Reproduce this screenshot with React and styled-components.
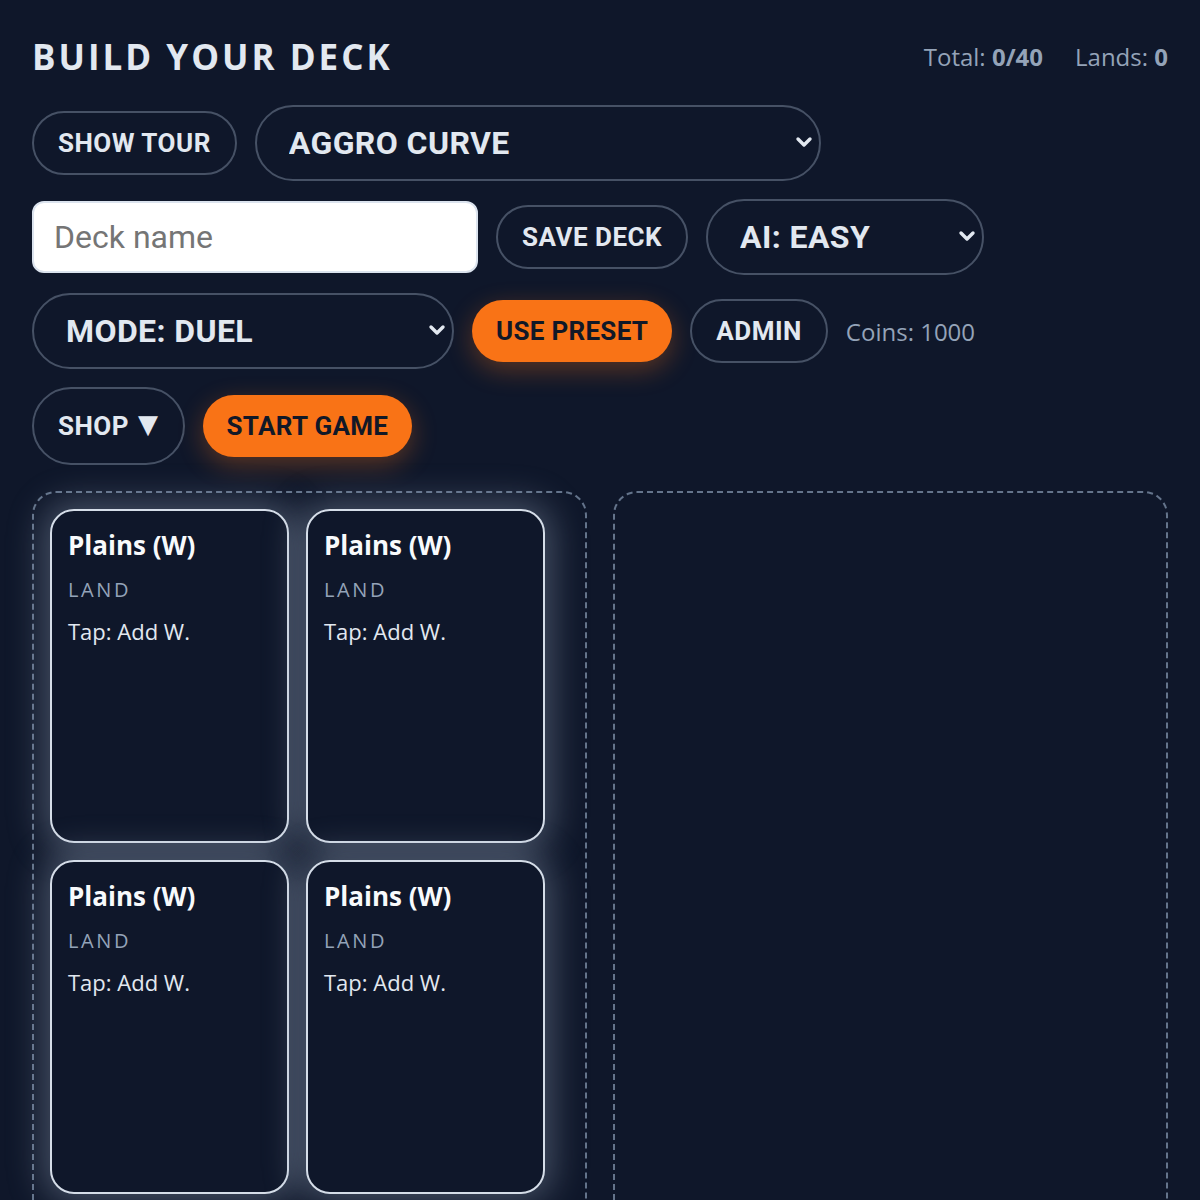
import React from 'react'
import styled, { createGlobalStyle } from 'styled-components'

const GlobalStyle = createGlobalStyle`
  html, body {
    margin: 0;
    padding: 0;
    background: #0f172a;
    min-height: 100%;
  }
  body {
    font-family: 'Open Sans', 'Noto Sans', sans-serif;
    color: #e2e8f0;
  }
`

const Page = styled.main`
  box-sizing: border-box;
  min-height: 1200px;
  padding: 36px 32px 0;
  background: #0f172a;
  overflow: hidden;
`

const Header = styled.header`
  display: flex;
  align-items: center;
  justify-content: space-between;
  margin-bottom: 28px;
`

const Title = styled.h1`
  margin: 0;
  font-family: 'Open Sans', sans-serif;
  font-size: 35px;
  font-weight: 700;
  line-height: 41px;
  letter-spacing: 3px;
  text-transform: uppercase;
  color: #e2e8f0;
`

const Stats = styled.div`
  display: flex;
  gap: 32px;
  font-size: 24px;
  color: #94a3b8;

  b {
    font-weight: 700;
  }
`

const Controls = styled.section`
  display: flex;
  flex-direction: column;
  gap: 18px;
  margin-bottom: 26px;
`

const Row = styled.div`
  display: flex;
  align-items: center;
  gap: 18px;
`

const Button = styled.button`
  box-sizing: border-box;
  display: inline-flex;
  align-items: center;
  gap: 9px;
  height: ${(p) => (p.$tall ? '78px' : p.$primary ? '62px' : '64px')};
  padding: 0 24px;
  border-radius: 999px;
  border: ${(p) => (p.$primary ? 'none' : '2px solid #465165')};
  background: ${(p) => (p.$primary ? '#f97316' : 'transparent')};
  color: ${(p) => (p.$primary ? '#111827' : '#e2e8f0')};
  box-shadow: ${(p) => (p.$primary ? '0 8px 26px rgba(249, 115, 22, 0.32)' : 'none')};
  font-family: Roboto, 'Liberation Sans', sans-serif;
  font-size: 26px;
  font-weight: 700;
  letter-spacing: ${(p) => (p.$primary ? '0.3px' : '0.5px')};
  text-transform: uppercase;
  white-space: nowrap;
  cursor: pointer;
`

const Caret = styled.span`
  font-family: 'DejaVu Sans', sans-serif;
  font-size: 26px;
  line-height: 1;
  margin-top: -4px;
`

const SelectWrap = styled.div`
  position: relative;
  width: ${(p) => p.$width}px;
`

const Select = styled.select`
  appearance: none;
  box-sizing: border-box;
  width: 100%;
  height: 76px;
  padding: 0 48px 0 32px;
  border-radius: 999px;
  border: 2px solid #465165;
  background: #0f172a;
  color: #e2e8f0;
  font-family: Roboto, 'Liberation Sans', sans-serif;
  font-size: 32px;
  font-weight: 700;
  letter-spacing: 0.4px;
  text-transform: uppercase;
  outline: none;
`

const Chevron = styled.svg`
  position: absolute;
  right: 8px;
  top: 50%;
  width: 18px;
  height: 12px;
  margin-top: -7px;
  pointer-events: none;
`

const NameInput = styled.input`
  box-sizing: border-box;
  width: 446px;
  height: 72px;
  padding: 0 20px;
  border-radius: 12px;
  border: 2px solid #dbe3ee;
  background: #ffffff;
  color: #1f2937;
  font-family: Roboto, 'Liberation Sans', sans-serif;
  font-size: 32px;
  outline: none;

  &::placeholder {
    color: #757575;
  }
`

const Coins = styled.span`
  font-size: 24px;
  color: #94a3b8;
`

const Boards = styled.section`
  display: grid;
  grid-template-columns: 1fr 1fr;
  gap: 26px;
`

const Pile = styled.div`
  box-sizing: border-box;
  min-height: 760px;
  padding: 16px;
  border: 2px dashed #64748b;
  border-radius: 24px;
  display: grid;
  grid-template-columns: repeat(auto-fill, 239px);
  grid-auto-rows: 334px;
  gap: 17px;
  align-content: start;
`

const Card = styled.article`
  box-sizing: border-box;
  display: flex;
  flex-direction: column;
  padding: 18px 16px 16px;
  border: 2px solid #d5dde8;
  border-radius: 24px;
  background: #0f172a;
  box-shadow: 0 0 34px 8px rgba(148, 163, 184, 0.4);
`

const CardName = styled.h3`
  margin: 0 0 13px;
  font-size: 26px;
  font-weight: 700;
  line-height: 33px;
  color: #f8fafc;
`

const CardType = styled.div`
  margin-bottom: 11px;
  font-size: 20px;
  line-height: 30px;
  letter-spacing: 2.6px;
  text-transform: uppercase;
  color: #94a3b8;
`

const CardText = styled.p`
  margin: 0;
  font-size: 22px;
  line-height: 30px;
  color: #e2e8f0;
`

const ChevronIcon = () => (
  <Chevron viewBox='0 0 18 12' aria-hidden>
    <path
      d='M3 3l6 6 6-6'
      stroke='#e2e8f0'
      strokeWidth='3.4'
      fill='none'
      strokeLinecap='round'
      strokeLinejoin='round'
    />
  </Chevron>
)

const Dropdown = ({ width, options }) => (
  <SelectWrap $width={width}>
    <Select defaultValue={options[0]}>
      {options.map((o) => (
        <option key={o}>{o}</option>
      ))}
    </Select>
    <ChevronIcon />
  </SelectWrap>
)

const deck = [1, 2, 3, 4].map((id) => ({
  id,
  name: 'Plains (W)',
  type: 'Land',
  text: 'Tap: Add W.',
}))

export default function App() {
  return (
    <>
      <GlobalStyle />
      <Page>
        <Header>
          <Title>Build your deck</Title>
          <Stats>
            <span>
              Total: <b>0/40</b>
            </span>
            <span>
              Lands: <b>0</b>
            </span>
          </Stats>
        </Header>

        <Controls>
          <Row>
            <Button>Show tour</Button>
            <Dropdown width={566} options={['Aggro curve', 'Control', 'Midrange']} />
          </Row>
          <Row>
            <NameInput placeholder='Deck name' />
            <Button>Save deck</Button>
            <Dropdown width={278} options={['AI: Easy', 'AI: Normal', 'AI: Hard']} />
          </Row>
          <Row>
            <Dropdown width={422} options={['Mode: Duel', 'Mode: Draft']} />
            <Button $primary>Use preset</Button>
            <Button>Admin</Button>
            <Coins>Coins: 1000</Coins>
          </Row>
          <Row>
            <Button $tall>
              Shop
              <Caret>▼</Caret>
            </Button>
            <Button $primary>Start game</Button>
          </Row>
        </Controls>

        <Boards>
          <Pile>
            {deck.map((c) => (
              <Card key={c.id}>
                <CardName>{c.name}</CardName>
                <CardType>{c.type}</CardType>
                <CardText>{c.text}</CardText>
              </Card>
            ))}
          </Pile>
          <Pile />
        </Boards>
      </Page>
    </>
  )
}
